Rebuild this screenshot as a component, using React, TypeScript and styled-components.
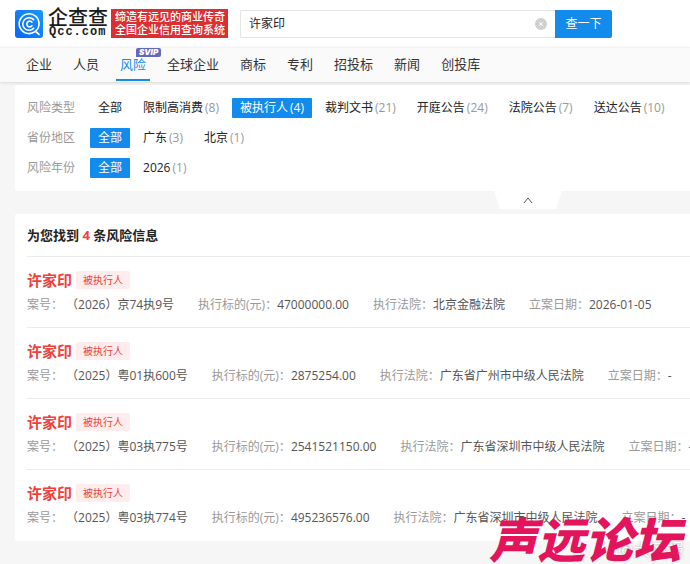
import React, { useState } from "react";
import styled, { createGlobalStyle } from "styled-components";

const GlobalStyle = createGlobalStyle`
  * { box-sizing: border-box; }
  body {
    margin: 0;
    background: #f6f6f6;
    color: #333;
    font: 12px/20px "Open Sans", "Noto Sans CJK SC", sans-serif;
    text-spacing-trim: space-all;
    overflow-x: hidden;
  }
  button, input { font: inherit; border: 0; padding: 0; margin: 0; }
  button { cursor: pointer; white-space: nowrap; }
  a { text-decoration: none; color: inherit; }
`;

const Page = styled.div`
  position: relative;
  min-height: 100vh;
  overflow: hidden;
`;

const Header = styled.header`
  display: flex;
  align-items: center;
  height: 47px;
  padding-left: 15px;
  background: #fff;
`;

const Brand = styled.a`
  display: flex;
  align-items: center;
  flex: none;
`;

const BrandName = styled.span`
  display: flex;
  flex-direction: column;
  width: 62px;
  margin-left: 5px;
  color: #1c1c1c;
`;

const BrandTitle = styled.span`
  font-size: 20px;
  line-height: 18px;
  font-weight: 500;
`;

const BrandDomain = styled.span`
  padding-left: 1px;
  font: 700 12px/11px "Liberation Mono", monospace;
  letter-spacing: 1px;
`;

const Slogan = styled.p`
  flex: none;
  margin: 0 0 0 1px;
  padding: 1px 4px;
  width: 117px;
  height: 29px;
  background: #dc2f32;
  color: #fff;
  font-size: 11px;
  line-height: 13px;
  font-weight: 500;
  white-space: nowrap;
`;

const SearchForm = styled.form`
  display: flex;
  flex: none;
  margin-left: 12px;
  height: 28px;
`;

const SearchField = styled.div`
  display: flex;
  align-items: center;
  width: 315px;
  padding: 0 8px;
  border: 1px solid #e4e4e4;
  border-right: 0;
  border-radius: 2px 0 0 2px;
  background: #fff;
`;

const SearchInput = styled.input`
  flex: 1;
  min-width: 0;
  background: transparent;
  color: #222;
  outline: none;
`;

const ClearButton = styled.button`
  display: flex;
  background: transparent;
`;

const SearchButton = styled.button`
  width: 57px;
  background: #128bed;
  color: #fff;
  border-radius: 0 2px 2px 0;
`;

const Nav = styled.nav`
  position: relative;
  display: flex;
  gap: 21px;
  height: 35px;
  padding-left: 26px;
  background: #fafafa;
  border-top: 1px solid #f3f3f3;
  box-shadow: 0 1px 3px rgba(0, 0, 0, 0.12);
  font-size: 13px;
  line-height: 32px;
`;

const NavLink = styled.a<{ $active?: boolean }>`
  position: relative;
  white-space: nowrap;
  color: ${(p) => (p.$active ? "#128bed" : "#333")};
  &::after {
    content: "";
    display: ${(p) => (p.$active ? "block" : "none")};
    position: absolute;
    left: -4px;
    right: -4px;
    bottom: 1px;
    height: 2px;
    background: #128bed;
  }
`;

const VipBadge = styled.span`
  position: absolute;
  left: 16px;
  top: 0;
  width: 25px;
  height: 9px;
  border-radius: 2px 2px 2px 0;
  background: #6468b8;
  color: #fff;
  font: italic 900 8px/9px Inter, sans-serif;
  text-align: center;
`;

const Card = styled.section`
  margin-left: 15px;
  padding-left: 12px;
  background: #fff;
  border-radius: 2px 0 0 2px;
`;

const FilterCard = styled(Card)`
  display: flex;
  flex-direction: column;
  gap: 10px;
  margin-top: 3px;
  padding-top: 13px;
  padding-bottom: 13px;
`;

const FilterRow = styled.div`
  display: flex;
  gap: 5px;
  height: 20px;
`;

const FilterLabel = styled.span`
  flex: none;
  width: 58px;
  color: #999;
`;

const FilterOption = styled.button<{ $on?: boolean }>`
  flex: none;
  padding: 0 8px;
  border-radius: 1px;
  background: ${(p) => (p.$on ? "#128bed" : "transparent")};
  color: ${(p) => (p.$on ? "#fff" : "#222")};
  small {
    margin-left: 2px;
    font-size: 12px;
    color: ${(p) => (p.$on ? "#fff" : "#999")};
  }
`;

const CollapseRow = styled.div`
  display: flex;
  height: 23px;
  padding-left: 494px;
`;

const CollapseTab = styled.button`
  display: flex;
  justify-content: center;
  align-items: center;
  width: 68px;
  height: 18px;
  background: #fff;
  clip-path: polygon(0 0, 100% 0, 91% 100%, 9% 100%);
`;

const ResultTitle = styled.h2`
  margin: 0;
  height: 43px;
  border-bottom: 1px solid #ebebeb;
  font-size: 13px;
  line-height: 43px;
  font-weight: 700;
  color: #222;
  em { font-style: normal; color: #f04040; }
`;

const ResultList = styled.ul`
  list-style: none;
  margin: 0;
  padding: 0;
`;

const ResultItem = styled.li`
  height: 71px;
  padding-top: 12px;
  border-bottom: 1px solid #ebebeb;
  &:last-child { border-bottom: 0; }
`;

const NameLine = styled.div`
  display: flex;
  align-items: center;
  gap: 4px;
  height: 22px;
`;

const PersonName = styled.a`
  color: #f04040;
  font-size: 15px;
  font-weight: 700;
`;

const RoleTag = styled.span`
  height: 18px;
  padding: 0 7px;
  border-radius: 2px;
  background: #ffecec;
  color: #f04040;
  font-size: 10px;
  line-height: 18px;
`;

const Facts = styled.dl`
  display: flex;
  gap: 24px;
  margin: 4px 0 0;
  white-space: nowrap;
`;

const Fact = styled.div<{ $spaced?: boolean }>`
  display: flex;
  flex: none;
  gap: ${(p) => (p.$spaced ? "3px" : "0")};
  dt { color: #999; }
  dd { margin: 0; color: #555; }
`;

const Watermark = styled.div`
  position: absolute;
  right: 9px;
  bottom: 5px;
  color: #e4145c;
  font: italic 900 48px/44px "Noto Sans CJK SC", sans-serif;
  white-space: nowrap;
  pointer-events: none;
`;

const SourceMark = styled.div`
  position: absolute;
  right: 6px;
  bottom: 4px;
  color: #fff;
  font-size: 17px;
  line-height: 20px;
  text-shadow: 0 0 2px #999;
  pointer-events: none;
`;

const nav = ["企业", "人员", "风险", "全球企业", "商标", "专利", "招投标", "新闻", "创投库"];

type Option = { name: string; count?: number };
const filters: { label: string; initial: string; options: Option[] }[] = [
  {
    label: "风险类型",
    initial: "被执行人",
    options: [
      { name: "全部" },
      { name: "限制高消费", count: 8 },
      { name: "被执行人", count: 4 },
      { name: "裁判文书", count: 21 },
      { name: "开庭公告", count: 24 },
      { name: "法院公告", count: 7 },
      { name: "送达公告", count: 10 },
    ],
  },
  {
    label: "省份地区",
    initial: "全部",
    options: [{ name: "全部" }, { name: "广东", count: 3 }, { name: "北京", count: 1 }],
  },
  { label: "风险年份", initial: "全部", options: [{ name: "全部" }, { name: "2026", count: 1 }] },
];

const results = [
  { no: "（2026）京74执9号", amount: "47000000.00", court: "北京金融法院", date: "2026-01-05" },
  { no: "（2025）粤01执600号", amount: "2875254.00", court: "广东省广州市中级人民法院", date: "-" },
  { no: "（2025）粤03执775号", amount: "2541521150.00", court: "广东省深圳市中级人民法院", date: "-" },
  { no: "（2025）粤03执774号", amount: "495236576.00", court: "广东省深圳市中级人民法院", date: "-" },
];

function LogoMark() {
  return (
    <svg width="28" height="28" viewBox="0 0 28 28" aria-hidden="true">
      <defs>
        <linearGradient id="logo-fill" x1="0" y1="1" x2="1" y2="0">
          <stop offset="0" stopColor="#0668f6" />
          <stop offset="1" stopColor="#1a98fb" />
        </linearGradient>
      </defs>
      <rect width="28" height="28" rx="3" fill="url(#logo-fill)" />
      <g fill="none" stroke="#fff" strokeLinecap="round">
        <path d="M20 21.6A9.9 9.9 0 1 1 24 14C24 17 22.6 19.6 20.4 21.2L24 24.4" strokeWidth="1.6" />
        <path d="M18.6 9.6A6.3 6.3 0 1 0 18.6 18.4" strokeWidth="1.6" />
        <path d="M17 12.2A2.9 2.9 0 1 0 17 15.8" strokeWidth="1.6" />
      </g>
    </svg>
  );
}

function Filter({ label, initial, options }: (typeof filters)[number]) {
  const [selected, setSelected] = useState(initial);
  return (
    <FilterRow role="group" aria-label={label}>
      <FilterLabel>{label}</FilterLabel>
      {options.map((o) => (
        <FilterOption
          key={o.name}
          type="button"
          $on={o.name === selected}
          aria-pressed={o.name === selected}
          onClick={() => setSelected(o.name)}
        >
          {o.name}
          {o.count !== undefined && <small>({o.count})</small>}
        </FilterOption>
      ))}
    </FilterRow>
  );
}

export default function App() {
  const [query, setQuery] = useState("许家印");
  return (
    <Page>
      <GlobalStyle />
      <Header>
        <Brand href="#">
          <LogoMark />
          <BrandName>
            <BrandTitle>企查查</BrandTitle>
            <BrandDomain>Qcc.com</BrandDomain>
          </BrandName>
        </Brand>
        <Slogan>
          缔造有远见的商业传奇
          <br />
          全国企业信用查询系统
        </Slogan>
        <SearchForm onSubmit={(e) => e.preventDefault()}>
          <SearchField>
            <SearchInput aria-label="搜索" value={query} onChange={(e) => setQuery(e.target.value)} />
            <ClearButton type="button" aria-label="清除" onClick={() => setQuery("")}>
              <svg width="12" height="12" viewBox="0 0 12 12">
                <circle cx="6" cy="6" r="6" fill="#d0d0d0" />
                <path d="M4.2 4.2l3.6 3.6M7.8 4.2L4.2 7.8" stroke="#fff" />
              </svg>
            </ClearButton>
          </SearchField>
          <SearchButton>查一下</SearchButton>
        </SearchForm>
      </Header>
      <Nav>
        {nav.map((n) => (
          <NavLink key={n} href="#" $active={n === "风险"}>
            {n}
            {n === "风险" && <VipBadge>SVIP</VipBadge>}
          </NavLink>
        ))}
      </Nav>
      <FilterCard>
        {filters.map((f) => (
          <Filter key={f.label} {...f} />
        ))}
      </FilterCard>
      <CollapseRow>
        <CollapseTab type="button" aria-label="收起">
          <svg width="10" height="8" viewBox="0 0 10 8" fill="none" stroke="#555">
            <path d="M1 7L5 2L9 7" />
          </svg>
        </CollapseTab>
      </CollapseRow>
      <Card>
        <ResultTitle>
          为您找到 <em>4</em> 条风险信息
        </ResultTitle>
        <ResultList>
          {results.map((r) => (
            <ResultItem key={r.no}>
              <NameLine>
                <PersonName href="#">许家印</PersonName>
                <RoleTag>被执行人</RoleTag>
              </NameLine>
              <Facts>
                <Fact $spaced><dt>案号：</dt><dd>{r.no}</dd></Fact>
                <Fact><dt>执行标的(元)：</dt><dd>{r.amount}</dd></Fact>
                <Fact><dt>执行法院：</dt><dd>{r.court}</dd></Fact>
                <Fact><dt>立案日期：</dt><dd>{r.date}</dd></Fact>
              </Facts>
            </ResultItem>
          ))}
        </ResultList>
      </Card>
      <SourceMark>@大河报</SourceMark>
      <Watermark>声远论坛</Watermark>
    </Page>
  );
}
